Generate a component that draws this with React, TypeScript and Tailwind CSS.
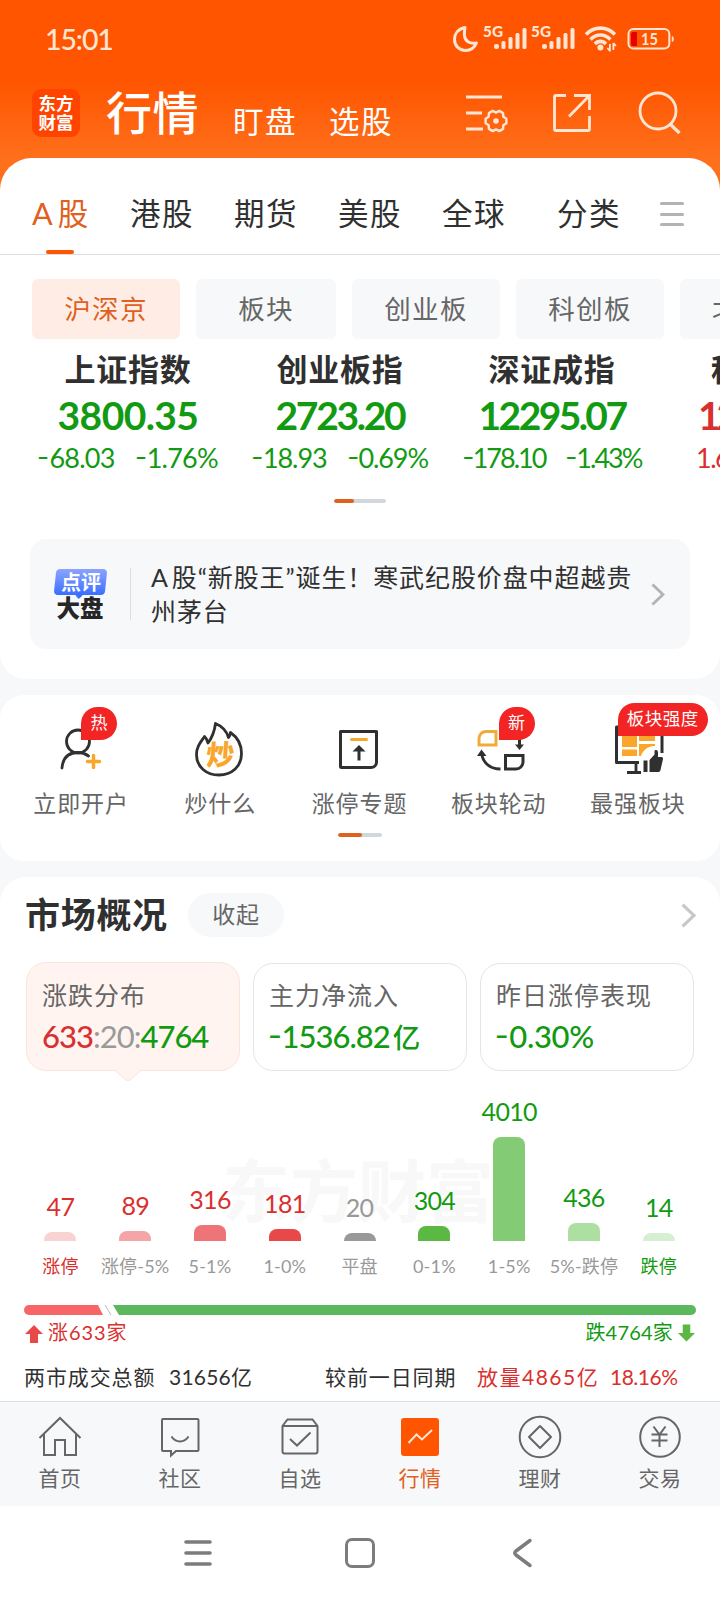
import React from "react";
import clsx from "clsx";

const tabs = [
  { label: "港股", width: "w-[104px]" },
  { label: "期货", width: "w-[104px]" },
  { label: "美股", width: "w-[104px]" },
  { label: "全球", width: "w-[115px]" },
  { label: "分类", width: "w-[103px]" },
];

const chips = [
  { label: "沪深京", width: "w-[148px]", active: true },
  { label: "板块", width: "w-[140px]" },
  { label: "创业板", width: "w-[148px]" },
  { label: "科创板", width: "w-[148px]" },
];

const indices = [
  { name: "上证指数", value: "3800.35", change: "-68.03", percent: "-1.76%", tracking: "tracking-[-0.600px]", small: "tracking-[-0.800px]" },
  { name: "创业板指", value: "2723.20", change: "-18.93", percent: "-0.69%", tracking: "tracking-[-2.300px]", small: "tracking-[-1.100px]" },
  { name: "深证成指", value: "12295.07", change: "-178.10", percent: "-1.43%", tracking: "tracking-[-2.600px]", small: "tracking-[-2px]" },
];

const bars = [
  { count: "47", label: "涨停", height: 9, fill: "bg-[#f9d3d3]", text: "text-[#d9302f]", axis: "text-[#d9302f]" },
  { count: "89", label: "涨停-5%", height: 10, fill: "bg-[#f3a5a8]", text: "text-[#d9302f]", axis: "text-[#999]" },
  { count: "316", label: "5-1%", height: 16, fill: "bg-[#ed7577]", text: "text-[#d9302f]", axis: "text-[#999]" },
  { count: "181", label: "1-0%", height: 12, fill: "bg-[#e84847]", text: "text-[#d9302f]", axis: "text-[#999]" },
  { count: "20", label: "平盘", height: 8, fill: "bg-[#999]", text: "text-[#999]", axis: "text-[#999]" },
  { count: "304", label: "0-1%", height: 15, fill: "bg-[#5bb943]", text: "text-[#129a12]", axis: "text-[#999]" },
  { count: "4010", label: "1-5%", height: 104, fill: "bg-[#84cb76]", text: "text-[#129a12]", axis: "text-[#999]" },
  { count: "436", label: "5%-跌停", height: 18, fill: "bg-[#addea2]", text: "text-[#129a12]", axis: "text-[#999]" },
  { count: "14", label: "跌停", height: 8, fill: "bg-[#d6eed1]", text: "text-[#129a12]", axis: "text-[#129a12]" },
];

// Wider, slightly raised hyphen so it reads as a minus sign
const Num = ({ value }: { value: string }) => (
  <>
    {value.split(/(-)/).map((part, i) =>
      part === "-" ? (
        <span key={i} className="mr-[2px] inline-block -translate-y-[2px] scale-x-[1.25]">-</span>
      ) : (
        part
      )
    )}
  </>
);

const Signal = () => (
  <svg className="overflow-visible" width="44" height="28" viewBox="0 0 44 28" fill="#ffe5d3">
    <text x="0" y="12" fontSize="15" fontWeight="900" fontFamily="Lato" textLength="20" lengthAdjust="spacingAndGlyphs">5G</text>
    <rect x="11" y="19" width="5" height="5" rx="2" />
    <rect x="18.500" y="16" width="4" height="8" rx="1.500" />
    <rect x="25.500" y="12" width="4" height="12" rx="1.500" />
    <rect x="32.500" y="8" width="4" height="16" rx="1.500" />
    <rect x="39.500" y="3" width="4" height="21" rx="1.500" />
  </svg>
);

const StatusBar = () => (
  <div className="flex h-[78px] items-center pl-[45px] pr-[45px] text-[#ffe5d3]">
    <span className="w-[410px] text-[28.500px] leading-[30px] font-medium tracking-[-1.100px]">15:01</span>
    <svg className="mr-[4px]" width="26" height="28" viewBox="0 0 26 28" fill="none" stroke="#ffe5d3" strokeWidth="3" strokeLinejoin="round">
      <path d="M12 2.500C5 4 1.500 9 1.500 14.500c0 6.500 5 11 11 11 5 0 9-2.500 11-7.500-7 1-11.500-2-12-7.500-.3-3 .1-5.500.5-8z" />
    </svg>
    <Signal />
    <div className="w-[4px]" />
    <Signal />
    <svg className="ml-[9px]" width="34" height="28" viewBox="0 0 34 28" fill="none" stroke="#ffe5d3" strokeWidth="3.600">
      <path d="M2 9.500C10 1 23 1 31 9.500M6.500 14.500c6-6 14-6 20 0M11 19c3-3.500 8-3.500 11 0" />
      <circle cx="16.500" cy="22.500" r="3" fill="#ffe5d3" stroke="none" />
      <path d="M26 19v7.500M29.500 18v7M23.500 23l2.500 3M32 21l-2.500-3" strokeWidth="1.800" />
    </svg>
    <svg className="ml-[9px]" width="48" height="24" viewBox="0 0 48 24" fill="none">
      <rect x="1.500" y="2" width="41" height="19.500" rx="5" stroke="#ffe5d3" strokeWidth="2" />
      <path d="M6 5h4v14H6a2 2 0 0 1-2-2V7a2 2 0 0 1 2-2z" fill="#e60000" />
      <path d="M45 9c1.500.5 2 1.500 2 3s-.5 2.500-2 3z" fill="#ffe5d3" />
      <text x="14" y="18" fontSize="18" fontWeight="700" fontFamily="Lato" fill="#ffe5d3" textLength="17" lengthAdjust="spacingAndGlyphs">15</text>
    </svg>
  </div>
);

const Header = () => (
  <div className="flex h-[80px] pl-[32px] text-white">
    <div className="mt-[11px] flex h-[48px] w-[48px] flex-col items-center justify-center rounded-[9px] bg-[#ff4400] text-[17.500px] leading-[19.500px] font-bold">
      <span className="block">东方</span>
      <span className="block">财富</span>
    </div>
    <span className="ml-[26px] mt-[8px] w-[127px] text-[46px] leading-[54px] font-medium tracking-[0.500px] whitespace-nowrap">行情</span>
    <span className="mt-[25px] w-[96px] text-[30.500px] leading-[36px] tracking-[1.500px]">盯盘</span>
    <span className="mt-[25px] w-[137px] text-[30.500px] leading-[36px] tracking-[1.500px]">选股</span>
    <svg className="mt-[14px]" width="43" height="42" viewBox="0 0 43 42" fill="none" stroke="#ffe5d3" strokeWidth="2.800">
      <path d="M0 5h36M0 21h16M0 37h17" />
      <path
        d="M10.400-2.200V2.200L7.300 4.200 7.100 7.900 3.300 10.100 0 8.400-3.300 10.100-7.100 7.900-7.300 4.200-10.400 2.200V-2.200L-7.300-4.200-7.100-7.900-3.300-10.100 0-8.400 3.300-10.100 7.100-7.900 7.300-4.200z"
        transform="translate(30 29)"
        strokeWidth="2.400"
        strokeLinejoin="round"
      />
      <circle cx="30" cy="29" r="2.800" fill="#ffe5d3" stroke="none" />
    </svg>
    <svg className="ml-[41px] mt-[14px]" width="42" height="42" viewBox="0 0 42 42" fill="none" stroke="#ffe5d3" strokeWidth="2.800">
      <path d="M16 3.500H6A1.500 1.500 0 0 0 4.500 5V37A1.500 1.500 0 0 0 6 38.500H38a1.500 1.500 0 0 0 1.500-1.500V24M24 3.500h15.500V18M39 4L19 24.500" />
    </svg>
    <svg className="ml-[46px] mt-[13px]" width="44" height="44" viewBox="0 0 44 44" fill="none" stroke="#ffe5d3" strokeWidth="2.800">
      <circle cx="20" cy="20" r="18" />
      <path d="M32 33l9.500 9" strokeWidth="3.200" />
    </svg>
  </div>
);

const Pager = ({ wide }: { wide?: boolean }) => (
  <div className={clsx("mx-auto flex h-[4px] overflow-hidden rounded-full bg-[#d3d7db]", wide ? "w-[52px]" : "w-[44px]")}>
    <div className={clsx("rounded-full bg-[#e0601e]", wide ? "w-[20px]" : "w-[24px]")} />
  </div>
);

const Chevron = ({ className, size }: { className: string; size: number }) => (
  <svg className={className} width={size / 1.6} height={size} viewBox="0 0 15 24" fill="none" stroke="currentColor" strokeWidth="3">
    <path d="M1.500 1.500L12.500 12 1.500 22.500" />
  </svg>
);

const IndexPanel = () => (
  <section className="h-[521px] overflow-hidden rounded-t-[32px] rounded-b-[26px] bg-white">
    <div className="flex h-[97px] border-b border-[#dcdde0] pl-[32px] text-[30.500px] leading-[36px] text-[#303030]">
      <div className="flex w-[98px] flex-col pt-[37px] text-[#e0601e]">
        <span className="whitespace-nowrap">A<span className="ml-[5px]">股</span></span>
        <div className="mt-[19px] ml-[14px] h-[4px] w-[28px] rounded-full bg-[#ff5500]" />
      </div>
      {tabs.map((tab) => (
        <span key={tab.label} className={clsx("pt-[37px] tracking-[1.500px]", tab.width)}>
          {tab.label}
        </span>
      ))}
      <div className="mt-[44px] flex h-[24px] w-[24px] flex-col justify-between">
        <div className="h-[3px] rounded bg-[#b3b3b3]" />
        <div className="h-[3px] rounded bg-[#b3b3b3]" />
        <div className="h-[3px] rounded bg-[#b3b3b3]" />
      </div>
    </div>

    <div className="mt-[24px] flex gap-[16px] pl-[32px]">
      {chips.map((chip) => (
        <div
          key={chip.label}
          className={clsx(
            "h-[60px] shrink-0 rounded-[6px] text-center text-[26.500px] leading-[60px] tracking-[1.300px]",
            chip.width,
            chip.active ? "bg-[#ffede5] text-[#e0601e]" : "bg-[#f7f8fa] text-[#666]"
          )}
        >
          {chip.label}
        </div>
      ))}
      <div className="h-[60px] w-[148px] shrink-0 rounded-[6px] bg-[#f7f8fa] pl-[32px] text-[26.500px] leading-[60px] text-[#666]">北</div>
    </div>

    <div className="flex h-[160px] overflow-hidden pl-[22px]">
      {indices.map((item) => (
        <div key={item.name} className="w-[212px] shrink-0 text-center whitespace-nowrap text-[#129a12]">
          <p className="pt-[10px] text-[31px] leading-[40px] font-bold tracking-[0.800px] text-[#303030]">{item.name}</p>
          <p className={clsx("mt-[4px] text-[39px] leading-[44px] font-bold", item.tracking)}>{item.value}</p>
          <p className={clsx("mt-[4px] flex justify-center gap-[21px] text-[27px] leading-[34px]", item.small)}>
            <span><Num value={item.change} /></span>
            <span><Num value={item.percent} /></span>
          </p>
        </div>
      ))}
      <div className="shrink-0 whitespace-nowrap text-[#d9302f]">
        <p className="pt-[10px] pl-[53px] text-[31px] leading-[40px] font-bold text-[#303030]">科</p>
        <p className="mt-[4px] pl-[40px] text-[39px] leading-[44px] font-bold tracking-[-4px]">12</p>
        <p className="mt-[4px] pl-[38px] text-[27px] leading-[34px] tracking-[-1.500px]">1.6</p>
      </div>
    </div>
    <Pager wide />

    <div className="mx-[30px] mt-[36px] flex h-[110px] items-center rounded-[16px] bg-[#f7f8fa] pl-[23px]">
      <div className="flex w-[54px] flex-col items-center">
        <div className="relative h-[26px] w-[51px] -skew-x-6 rounded-[4px] bg-linear-to-b from-[#8ba3ff] to-[#3a6eff] text-center text-[20px] leading-[26px] font-bold text-white">
          <span className="inline-block skew-x-6">点评</span>
          <div className="absolute top-[24px] left-[23px] h-[5px] w-[5px] rotate-45 bg-[#3a6eff]" />
        </div>
        <span className="mt-px text-[23.500px] leading-[24px] font-black text-[#262626]">大盘</span>
      </div>
      <div className="ml-[23px] h-[52px] w-px bg-[#dcdde0]" />
      <p className="ml-[20px] w-[488px] text-[25px] leading-[34px] tracking-[0.900px] whitespace-nowrap text-[#303030]">
        A<span className="ml-[3px]">股“新股王”诞生！寒武纪股价盘中超越贵</span>
        <br />
        州茅台
      </p>
      <Chevron className="ml-[12px] text-[#b3b3b3]" size={23} />
    </div>
  </section>
);

const icons = {
  account: (
    <svg width="60" height="60" viewBox="0 0 60 60" fill="none" stroke="#303030" strokeWidth="2.800" strokeLinecap="round">
      <circle cx="28" cy="24.500" r="11.500" />
      <path d="M12 51c1-11.500 8-15.500 16-15.500 4 0 7.500 1.300 10.500 3.500" />
      <path d="M43.500 38.500v12M37.500 44.500h12" stroke="#f7a829" strokeWidth="3.500" />
    </svg>
  ),
  fire: (
    <svg width="60" height="60" viewBox="0 0 60 60" fill="none">
      <path
        d="M26.500 6.500c6 2.500 11 7 13 14 1.500-1.500 1.500-3.500 2-5C48 20 52.500 27 52.500 36.500 52.500 50 42.500 58 30 58S7.500 50 7.500 37.500C7.500 30 11 26 15.500 19.500c2 1.500 2.500 4 3.500 6.500 4.500-6 6.500-11.500 7.500-19.500z"
        stroke="#303030"
        strokeWidth="2.800"
        strokeLinejoin="round"
      />
      <text x="18" y="48.500" fontSize="28" fontWeight="900" fontFamily="Noto Sans CJK SC" fill="#f9a62b" transform="skewX(-4) translate(2 0)">炒</text>
    </svg>
  ),
  limit: (
    <svg width="60" height="60" viewBox="0 0 60 60" fill="none" stroke="#303030" strokeWidth="3">
      <path d="M12.500 14.500H48.500V45a5.500 5.500 0 0 1-5.500 5.500H13.500a1 1 0 0 1-1-1z" strokeLinejoin="round" />
      <path d="M23.500 22.500h15" stroke="#f7a829" strokeLinecap="round" />
      <path d="M31 43.500V30" />
      <path d="M24.500 34.500L31 28l6.500 6.500z" fill="#303030" stroke="none" />
    </svg>
  ),
  rotate: (
    <svg width="60" height="60" viewBox="0 0 60 60" fill="none" strokeWidth="3">
      <path d="M11 28v-6.500a7 7 0 0 1 7-7h10V28z" stroke="#f0ab38" />
      <path d="M37.500 38.500h17.500v6.500a7 7 0 0 1-7 7H37.500z" stroke="#303030" />
      <path d="M13.500 37c2 9 8.500 15 19 15M51.500 22v7" stroke="#303030" />
      <path d="M9 39l4.500-6.500 5 6.500zM47 27.500h9L51.500 33z" fill="#303030" />
    </svg>
  ),
  screen: (
    <svg width="60" height="60" viewBox="0 0 60 60" fill="none">
      <path d="M55 36V10H9.500v35.500H32" stroke="#303030" strokeWidth="3" strokeLinejoin="round" />
      <path d="M15 16h15v14H15zM32 16h16v8H32zM15 32.500h15V39H15zM32 27h16v2c-7 0-12 4-14 10h-2z" fill="#f9a62b" />
      <path d="M29 46v9M20 55.500h14" stroke="#303030" strokeWidth="2.800" />
      <path d="M36.500 43.500h4V55h-4zM42.500 43l5-5.500v-3c0-2 3-2 3.500.5V40h3.500c1.500 0 1.500 1 1.500 2l-2.500 11c-.5 1.500-1 2-2.500 2h-8.500z" fill="#303030" />
    </svg>
  ),
};

const shortcuts = [
  { label: "立即开户", icon: icons.account, badge: "热" },
  { label: "炒什么", icon: icons.fire },
  { label: "涨停专题", icon: icons.limit },
  { label: "板块轮动", icon: icons.rotate, badge: "新" },
  { label: "最强板块", icon: icons.screen, badge: "板块强度" },
];

const Shortcuts = () => (
  <section className="mt-[16px] h-[166px] rounded-[24px] bg-white">
    <div className="grid h-[138px] grid-cols-5 pr-[12px] pl-[12px]">
      {shortcuts.map((item) => (
        <div key={item.label} className="relative flex flex-col items-center pt-[22px]">
          <div className="mr-[3px] h-[60px] w-[60px]">{item.icon}</div>
          {item.badge && (
            <span
              className={clsx(
                "absolute left-[69px] h-[33px] rounded-full rounded-bl-none bg-[#f22424] text-center whitespace-nowrap text-white",
                item.badge.length > 1
                  ? "top-[8px] -ml-[20px] w-[90px] text-[17.500px] leading-[32px] tracking-[0.500px]"
                  : "top-[12px] w-[36px] text-[17px] leading-[32px]"
              )}
            >
              {item.badge}
            </span>
          )}
          <span className="mt-[9px] -ml-px text-[23px] leading-[34px] tracking-[0.900px] whitespace-nowrap text-[#666]">{item.label}</span>
        </div>
      ))}
    </div>
    <Pager />
  </section>
);

const SummaryCards = () => (
  <div className="mt-[25px] flex gap-[13px] pl-[26px] text-[31px] leading-[36px] font-medium text-[#129a12]">
    <div className="relative h-[109px] w-[214px] rounded-[20px] border border-[#fce4d9] bg-[#fff4f0] pt-[15px] pl-[15px]">
      <p className="text-[25px] leading-[34px] font-normal tracking-[1px] text-[#666]">涨跌分布</p>
      <p className="mt-[6px] tracking-[-1px] whitespace-nowrap">
        <span className="text-[#d9302f]">633</span>
        <span className="font-normal text-[#999]">:20:</span>4764
      </p>
      <svg className="absolute top-[106px] left-[87px]" width="28" height="13" viewBox="0 0 28 13">
        <path d="M0 1.500h2l10 9.500q2 1 4 0L26 1.500h2V0H0z" fill="#fff4f0" />
        <path d="M1 1.500l11 9.500q2 1 4 0L27 1.500" fill="none" stroke="#fce4d9" />
      </svg>
    </div>
    <div className="mt-px h-[108px] w-[214px] rounded-[20px] border border-[#e4e5e7] pt-[14px] pl-[15px]">
      <p className="text-[25px] leading-[34px] font-normal tracking-[1px] text-[#666]">主力净流入</p>
      <p className="mt-[6px] tracking-[-1px] whitespace-nowrap"><Num value="-1536.82" /><span className="ml-[3px] text-[27.500px]">亿</span></p>
    </div>
    <div className="mt-px h-[108px] w-[214px] rounded-[20px] border border-[#e4e5e7] pt-[14px] pl-[15px]">
      <p className="text-[25px] leading-[34px] font-normal tracking-[1px] text-[#666]">昨日涨停表现</p>
      <p className="mt-[6px] tracking-[-0.300px]"><Num value="-0.30%" /></p>
    </div>
  </div>
);

const Distribution = () => (
  <div className="relative mt-[17px] h-[194px] pl-[23px]">
    <span className="absolute top-[58px] left-[222px] text-[68px] leading-[90px] font-bold whitespace-nowrap text-[#f8f8f8]">东方财富</span>
    <div className="relative grid grid-cols-[repeat(9,74.8px)]">
      {bars.map((bar) => (
        <div key={bar.label} className="flex h-[194px] flex-col items-center justify-end whitespace-nowrap">
          <span className={clsx("mb-[12px] text-[25px] leading-[28px] tracking-[-0.700px]", bar.text)}>{bar.count}</span>
          <div className={clsx("w-[32px] shrink-0 rounded-t-[8px]", bar.fill)} style={{ height: bar.height }} />
          <span className={clsx("mt-[12px] h-[29px] text-[18px] leading-[26px] tracking-[0.200px]", bar.axis)}>{bar.label}</span>
        </div>
      ))}
    </div>
  </div>
);

const Market = () => (
  <section className="mt-[16px] h-[524px] rounded-t-[26px] bg-white">
    <div className="flex items-center pt-[16px] pl-[25px]">
      <h2 className="w-[163px] -translate-y-px text-[35px] leading-[44px] font-bold tracking-[0.700px] text-[#303030]">市场概况</h2>
      <div className="h-[44px] w-[96px] rounded-full bg-[#f7f8fa] text-center text-[23px] leading-[43px] tracking-[0.800px] text-[#666]">收起</div>
      <Chevron className="ml-[397px] text-[#c8c8c8]" size={25} />
    </div>
    <SummaryCards />
    <Distribution />

    <svg className="mt-[23px] ml-[24px]" width="672" height="10" viewBox="0 0 672 10">
      <path d="M5 0h69l5 10H5A5 5 0 0 1 5 0z" fill="#f76566" />
      <path d="M81 0l6 10" stroke="#bbb" strokeWidth="1" />
      <path d="M89 0h578a5 5 0 0 1 0 10H95z" fill="#5cb85c" />
    </svg>
    <div className="mt-[4px] flex items-center justify-between pr-[25px] pl-[25px] text-[20px] leading-[26px]">
      <div className="flex items-center gap-[5px] text-[#d9302f]">
        <svg className="mt-[3px]" width="18" height="18" viewBox="0 0 18 18" fill="#e84847"><path d="M9 0l9 9h-5v9H5V9H0z" /></svg>
        <span className="tracking-[0.900px]">涨633家</span>
      </div>
      <div className="flex items-center gap-[5px] text-[#129a12]">
        <span className="tracking-[0.200px]">跌4764家</span>
        <svg className="mt-[2px]" width="17" height="18" viewBox="0 0 18 18" fill="#5bb943"><path d="M9 18l9-9h-5V0H5v9H0z" /></svg>
      </div>
    </div>
    <div className="mt-[17px] flex pl-[24px] text-[21px] leading-[30px] tracking-[0.900px] whitespace-nowrap text-[#303030]">
      <span className="w-[145px]">两市成交总额</span>
      <span className="w-[156px] tracking-[0.200px]">31656亿</span>
      <span className="w-[152px]">较前一日同期</span>
      <span className="w-[133px] tracking-[1.500px] text-[#d9302f]">放量4865亿</span>
      <span className="tracking-[-0.500px] text-[#d9302f]">18.16%</span>
    </div>
  </section>
);

const navItems = [
  {
    label: "首页",
    icon: <path d="M1.500 23L22 3l20.500 20M6 19v21h11V25h10v15h11V19" />,
  },
  {
    label: "社区",
    icon: <path d="M5 4h34.500a1 1 0 0 1 1 1v30a1 1 0 0 1-1 1H18l-5 4.500V36H5a1 1 0 0 1-1-1V5a1 1 0 0 1 1-1zM13.500 21.500c4 6.500 13 6.500 17 0" />,
  },
  {
    label: "自选",
    icon: <path d="M9.500 4.500h25l5 6.500v25.500a2 2 0 0 1-2 2h-31a2 2 0 0 1-2-2V11zM4.500 11h35M12 24l7 6.500L32.500 17.500" />,
  },
  {
    label: "行情",
    active: true,
    icon: (
      <>
        <rect x="3" y="3" width="38" height="38" rx="3" fill="#ff5500" stroke="none" />
        <path d="M10.500 28l8-8.500 5.500 5L34 15" stroke="#ffe5d3" />
      </>
    ),
  },
  {
    label: "理财",
    icon: (
      <>
        <circle cx="22" cy="22" r="20.300" />
        <path d="M22 11l11 11-11 11-11-11z" strokeLinejoin="round" />
      </>
    ),
  },
  {
    label: "交易",
    icon: (
      <>
        <circle cx="22" cy="22" r="19.800" />
        <path d="M15.500 11.500l6 8 6-8M21.500 19.500V32M13.500 19.500h16M13.500 25.500h16" />
      </>
    ),
  },
];

const BottomNav = () => (
  <nav className="grid h-[105px] grid-cols-6 border-t border-[#dfe0e3] bg-[#f7f8fa]">
    {navItems.map((item) => (
      <div key={item.label} className={clsx("flex flex-col items-center pt-[13px]", item.active ? "text-[#e0601e]" : "text-[#666]")}>
        <svg width="44" height="44" viewBox="0 0 44 44" fill="none" stroke="currentColor" strokeWidth="2">
          {item.icon}
        </svg>
        <span className="mt-[4px] text-[21px] leading-[30px] tracking-[0.500px]">{item.label}</span>
      </div>
    ))}
  </nav>
);

const SystemNav = () => (
  <div className="flex h-[94px] items-center bg-white pl-[184px]">
    <svg width="28" height="30" viewBox="0 0 28 30" stroke="#7c7c7c" strokeWidth="3.600" strokeLinecap="round">
      <path d="M2 4h24M2 15h24M2 26h24" />
    </svg>
    <div className="ml-[133px] h-[30px] w-[30px] rounded-[7px] border-[3.500px] border-[#7c7c7c]" />
    <svg className="ml-[137px]" width="22" height="30" viewBox="0 0 22 30" fill="none" stroke="#7c7c7c" strokeWidth="3.500" strokeLinecap="round" strokeLinejoin="round">
      <path d="M18 2.500L4 13q-2.500 2 0 4l14 10.500" />
    </svg>
  </div>
);

export default function App() {
  return (
    <main className="h-[1600px] w-[720px] overflow-hidden bg-[linear-gradient(#ff5500_80px,#ff701c_160px,#ff701c_250px,#f7f8fa_250px)] font-['Lato','Noto_Sans_CJK_SC',sans-serif]">
      <StatusBar />
      <Header />
      <IndexPanel />
      <Shortcuts />
      <Market />
      <BottomNav />
      <SystemNav />
    </main>
  );
}
